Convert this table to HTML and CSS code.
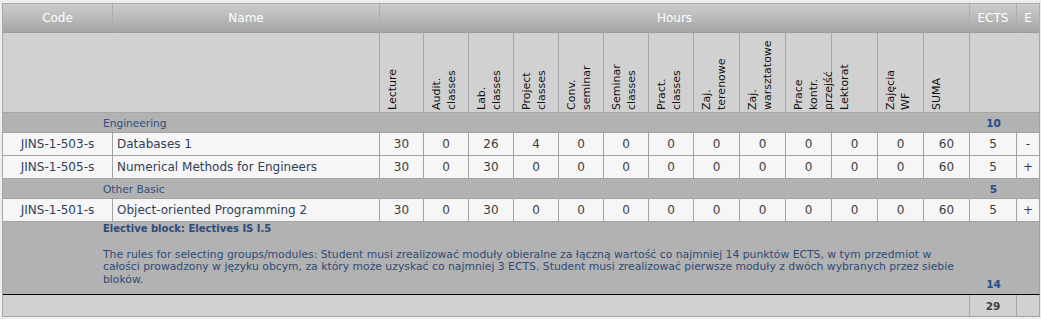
FILE: index.html
```html
<!DOCTYPE html>
<html lang="pl">
<head>
<meta charset="utf-8">
<title>Study plan</title>
<link rel="stylesheet" href="styles.css">
</head>
<body>
<div class="page">
  <table class="plan">
    <colgroup>
      <col class="w-code"><col class="w-name"><col class="w-44">
      <col class="w-45"><col class="w-45"><col class="w-45"><col class="w-45"><col class="w-45"><col class="w-45">
      <col class="w-46"><col class="w-46"><col class="w-46"><col class="w-46"><col class="w-46"><col class="w-46">
      <col class="w-ects"><col class="w-e">
    </colgroup>
    <thead>
      <tr class="head-main">
        <th>Code</th>
        <th>Name</th>
        <th colspan="13">Hours</th>
        <th>ECTS</th>
        <th>E</th>
      </tr>
      <tr class="head-types">
        <th colspan="2"></th>
        <th class="vhead"><div class="vt">Lecture</div></th>
        <th class="vhead"><div class="vt">Audit. classes</div></th>
        <th class="vhead"><div class="vt">Lab. classes</div></th>
        <th class="vhead"><div class="vt">Project classes</div></th>
        <th class="vhead"><div class="vt">Conv. seminar</div></th>
        <th class="vhead"><div class="vt">Seminar classes</div></th>
        <th class="vhead"><div class="vt">Pract. classes</div></th>
        <th class="vhead"><div class="vt">Zaj. terenowe</div></th>
        <th class="vhead"><div class="vt">Zaj. warsztatowe</div></th>
        <th class="vhead"><div class="vt">Prace kontr. przejść</div></th>
        <th class="vhead"><div class="vt">Lektorat</div></th>
        <th class="vhead"><div class="vt">Zajęcia WF</div></th>
        <th class="vhead"><div class="vt">SUMA</div></th>
        <th colspan="2"></th>
      </tr>
    </thead>
    <tbody>
      <tr class="group">
        <td colspan="15" class="group-name">Engineering</td>
        <td class="group-ects">10</td>
        <td class="group-end"></td>
      </tr>
      <tr class="course">
        <td class="code">JINS-1-503-s</td>
        <td class="name">Databases 1</td>
        <td>30</td><td>0</td><td>26</td><td>4</td><td>0</td><td>0</td><td>0</td>
        <td>0</td><td>0</td><td>0</td><td>0</td><td>0</td><td>60</td>
        <td>5</td><td>-</td>
      </tr>
      <tr class="course">
        <td class="code">JINS-1-505-s</td>
        <td class="name">Numerical Methods for Engineers</td>
        <td>30</td><td>0</td><td>30</td><td>0</td><td>0</td><td>0</td><td>0</td>
        <td>0</td><td>0</td><td>0</td><td>0</td><td>0</td><td>60</td>
        <td>5</td><td>+</td>
      </tr>
      <tr class="group">
        <td colspan="15" class="group-name">Other Basic</td>
        <td class="group-ects">5</td>
        <td class="group-end"></td>
      </tr>
      <tr class="course">
        <td class="code">JINS-1-501-s</td>
        <td class="name">Object-oriented Programming 2</td>
        <td>30</td><td>0</td><td>30</td><td>0</td><td>0</td><td>0</td><td>0</td>
        <td>0</td><td>0</td><td>0</td><td>0</td><td>0</td><td>60</td>
        <td>5</td><td>+</td>
      </tr>
      <tr class="block">
        <td colspan="15" class="block-text">
          <div class="block-title">Elective block: Electives IS I.5</div>
          <p class="rules">The rules for selecting groups/modules: Student musi zrealizować moduły obieralne za łączną wartość co najmniej 14 punktów ECTS, w tym przedmiot w całości prowadzony w języku obcym, za który może uzyskać co najmniej 3 ECTS. Student musi zrealizować pierwsze moduły z dwóch wybranych przez siebie bloków.</p>
        </td>
        <td class="block-ects">14</td>
        <td class="group-end"></td>
      </tr>
    </tbody>
    <tfoot>
      <tr class="total">
        <td colspan="15"></td>
        <td class="total-ects">29</td>
        <td></td>
      </tr>
    </tfoot>
  </table>
</div>
</body>
</html>
```
FILE: styles.css
```css
html, body {
  margin: 0;
  padding: 0;
  background: #eeeeee;
}

body {
  font-family: "DejaVu Sans", Verdana, sans-serif;
  font-size: 12px;
  color: #333;
}

.page {
  padding: 3px 0 0 2px;
}

.plan {
  table-layout: fixed;
  width: 1038px;
  border-collapse: separate;
  border-spacing: 0;
  border-top: 1px solid #a9a9a9;
  border-left: 1px solid #a9a9a9;
}

.plan th,
.plan td {
  border-right: 1px solid #a3a3a3;
  border-bottom: 1px solid #a3a3a3;
  padding: 0;
}

/* column widths */
.w-code { width: 110px; }
.w-name { width: 267px; }
.w-44 { width: 44px; }
.w-45 { width: 45px; }
.w-46 { width: 46px; }
.w-ects { width: 47px; }
.w-e { width: 23px; }

/* top header */
.head-main th {
  height: 28px;
  font-weight: normal;
  font-size: 12px;
  color: #ffffff;
  text-align: center;
  vertical-align: middle;
  background: linear-gradient(to bottom, #cdcdcd 0%, #b9b9b9 50%, #a4a4a4 100%);
  border-right-color: #acacac;
  border-bottom-color: #9d9d9d;
}

/* hour type header with rotated labels */
.head-types th {
  height: 77px;
  background: #d1d1d1;
  border-color: #a6a6a6;
}

.head-types th.vhead {
  vertical-align: bottom;
  text-align: left;
  padding: 0 0 2px 5px;
}

.vt {
  writing-mode: vertical-rl;
  transform: rotate(180deg);
  height: 52px;
  font-size: 11px;
  line-height: 15px;
  font-weight: normal;
  color: #111;
  white-space: normal;
}

/* group rows */
.group td {
  height: 19px;
  background: #b2b2b2;
  border-right: 0;
  vertical-align: middle;
}

.group td.group-end {
  border-right: 1px solid #a3a3a3;
}

.group-name {
  padding-left: 100px !important;
  font-size: 10.6px;
  color: #2f4f7f;
}

.group-ects,
.block-ects {
  text-align: center;
  font-weight: bold;
  font-size: 10.5px;
  color: #244c85;
}

/* course rows */
.course td {
  height: 22px;
  background: #f6f6f6;
  text-align: center;
  vertical-align: middle;
  color: #3d3d3d;
}

.course td.code {
  color: #2f3e5a;
}

.course td.name {
  text-align: left;
  padding-left: 4px;
  color: #2f3e5a;
  white-space: nowrap;
}

/* elective block */
.block td {
  height: 68px;
  background: #b2b2b2;
  border-right: 0;
  border-bottom: 1px solid #000;
}

.block td.group-end {
  border-right: 1px solid #a3a3a3;
}

.block-text {
  vertical-align: top;
  padding: 1px 3px 0 100px !important;
  color: #2f4a78;
  font-size: 10.8px;
  line-height: 12.7px;
}

.block-title {
  font-weight: bold;
  font-size: 10px;
}

.rules {
  margin: 13px 0 0;
}

.block-ects {
  vertical-align: bottom;
  padding-bottom: 4px !important;
}

/* total row */
.total td {
  height: 21px;
  background: #d1d1d1;
  border-color: #a6a6a6;
}

.total-ects {
  text-align: center;
  font-weight: bold;
  font-size: 10.5px;
  color: #3f3f3f;
}
```
